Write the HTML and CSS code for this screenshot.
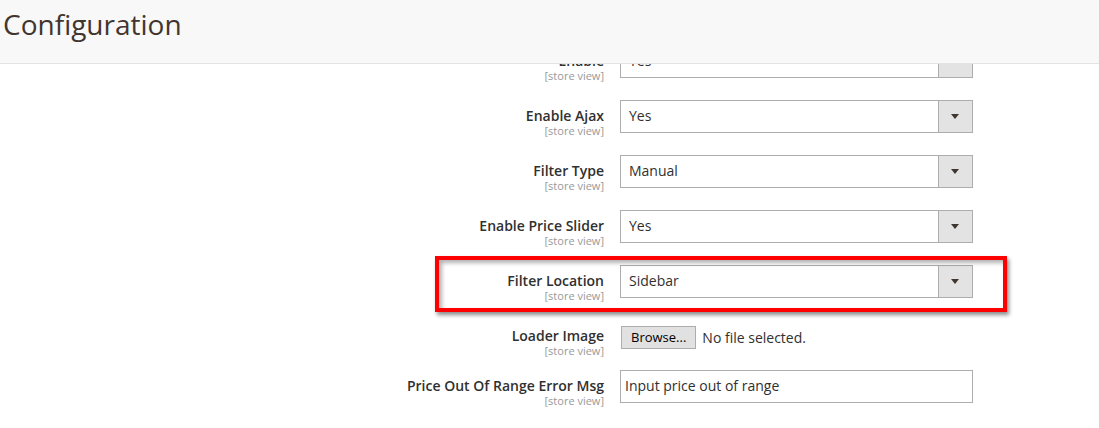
FILE: index.html
```html
<!DOCTYPE html>
<html>
<head>
<meta charset="utf-8">
<link rel="stylesheet" href="styles.css">
</head>
<body>
<header class="page-header">
  <h1 class="page-title">Configuration</h1>
</header>
<main class="form">
  <div class="row">
    <div class="label"><span class="name">Enable</span><span class="scope">[store view]</span></div>
    <div class="select"><span class="value">Yes</span><span class="arrow"></span></div>
  </div>
  <div class="row">
    <div class="label"><span class="name">Enable Ajax</span><span class="scope">[store view]</span></div>
    <div class="select"><span class="value">Yes</span><span class="arrow"></span></div>
  </div>
  <div class="row">
    <div class="label"><span class="name">Filter Type</span><span class="scope">[store view]</span></div>
    <div class="select"><span class="value">Manual</span><span class="arrow"></span></div>
  </div>
  <div class="row">
    <div class="label"><span class="name">Enable Price Slider</span><span class="scope">[store view]</span></div>
    <div class="select"><span class="value">Yes</span><span class="arrow"></span></div>
  </div>
  <div class="row highlighted">
    <div class="label"><span class="name">Filter Location</span><span class="scope">[store view]</span></div>
    <div class="select"><span class="value">Sidebar</span><span class="arrow"></span></div>
    <div class="highlight"></div>
  </div>
  <div class="row file-row">
    <div class="label"><span class="name">Loader Image</span><span class="scope">[store view]</span></div>
    <div class="file"><span class="browse">Browse...</span><span class="nofile">No file selected.</span></div>
  </div>
  <div class="row">
    <div class="label"><span class="name">Price Out Of Range Error Msg</span><span class="scope">[store view]</span></div>
    <div class="input">Input price out of range</div>
  </div>
</main>
</body>
</html>
```

FILE: styles.css
```css
* { box-sizing: border-box; }
html, body { margin: 0; padding: 0; background: #ffffff; }
body {
  font-family: "Open Sans", "Liberation Sans", sans-serif;
  color: #303030;
  width: 1099px;
  height: 428px;
  overflow: hidden;
  position: relative;
}
.page-header {
  position: absolute;
  top: 0;
  left: 0;
  right: 0;
  height: 64px;
  background: #f8f8f8;
  border-bottom: 1px solid #e3e3e3;
  z-index: 2;
}
.page-title {
  margin: 0;
  padding: 5px 0 0 3px;
  font-size: 28px;
  font-weight: 400;
  line-height: 38px;
  color: #41362f;
}
.form {
  padding-top: 45px;
}
.row {
  position: relative;
  display: grid;
  grid-template-columns: 604px 353px;
  column-gap: 16px;
  height: 33px;
  margin-bottom: 22px;
}
.file-row { height: 28px; }
.label {
  display: flex;
  flex-direction: column;
  align-items: flex-end;
  padding-top: 6px;
  text-align: right;
}
.name {
  font-size: 14px;
  font-weight: 600;
  line-height: 19px;
  color: #303030;
}
.scope {
  font-size: 11px;
  line-height: 12px;
  color: #999999;
}
.select {
  display: flex;
  height: 33px;
  border: 1px solid #adadad;
  background: #ffffff;
}
.value {
  flex: 1;
  padding: 5px 0 0 8px;
  font-size: 14px;
  line-height: 19px;
  color: #303030;
}
.arrow {
  width: 34px;
  background: #e3e3e3;
  border-left: 1px solid #adadad;
  position: relative;
}
.arrow::after {
  content: "";
  position: absolute;
  left: 12px;
  top: 13px;
  border-left: 4px solid transparent;
  border-right: 4px solid transparent;
  border-top: 5px solid #41362f;
}
.file {
  display: flex;
  align-items: center;
  gap: 6px;
  height: 28px;
  padding-top: 6px;
}
.browse {
  display: inline-block;
  height: 23px;
  padding: 0 9px 0 9px;
  margin-left: 1px;
  background: #e1e1e1;
  border: 1px solid #adadad;
  font-size: 13px;
  line-height: 21px;
  color: #000000;
}
.nofile {
  font-size: 14px;
  color: #303030;
}
.input {
  height: 33px;
  border: 1px solid #adadad;
  padding: 5px 0 0 4px;
  font-size: 14px;
  line-height: 19px;
  color: #303030;
}
.highlight {
  position: absolute;
  left: 435px;
  top: -9px;
  width: 572px;
  height: 56px;
  border: 4px solid #ff0000;
  box-shadow: 2px 3px 4px rgba(0,0,0,0.45), inset 3px 3px 4px rgba(0,0,0,0.3);
  pointer-events: none;
}
```
